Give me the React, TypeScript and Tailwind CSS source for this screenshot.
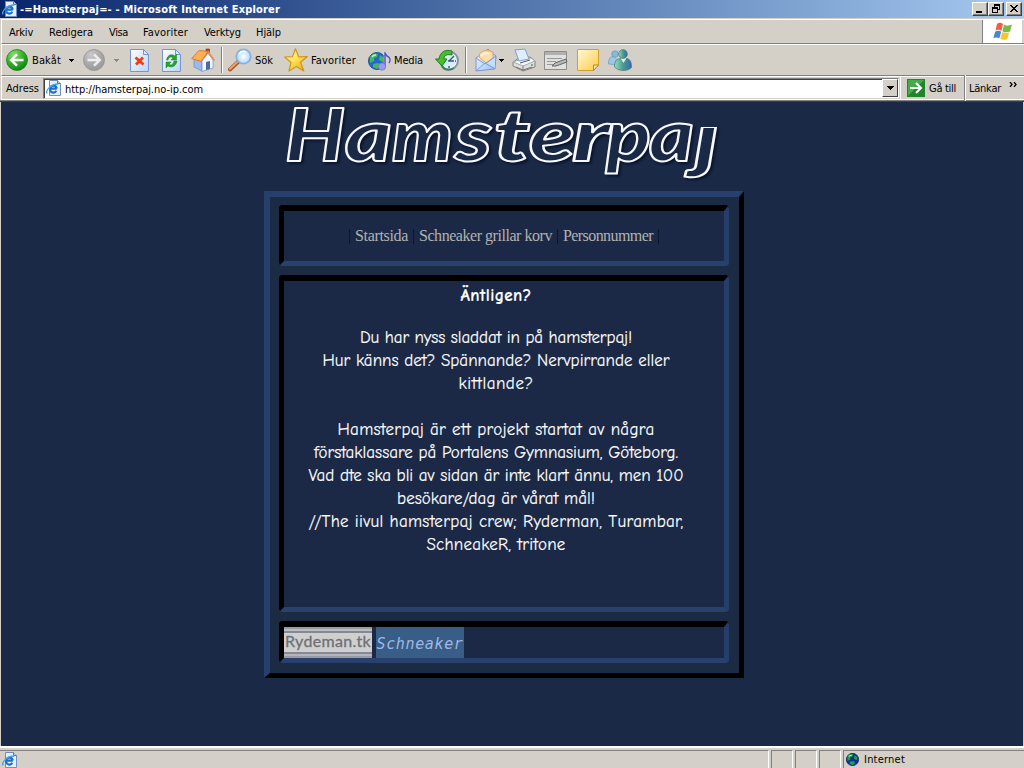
import { useLayoutEffect, useRef, useState, type ReactNode } from "react";

function Fit({ width, children, className = "" }: { width: number; children: string; className?: string }) {
  const ref = useRef<HTMLSpanElement>(null);
  const [spacing, setSpacing] = useState(0);
  useLayoutEffect(() => {
    if (ref.current) setSpacing((width - ref.current.getBoundingClientRect().width) / children.length);
  }, [width, children]);
  return (
    <span ref={ref} className={`inline-block shrink-0 whitespace-pre ${className}`} style={{ letterSpacing: `${spacing}px` }}>
      {children}
    </span>
  );
}

function IEPage({ className }: { className: string }) {
  return (
    <svg viewBox="0 0 16 16" className={className}>
      <path d="M3.5.5h8l3 3v12h-11z" fill="#e6effc" stroke="#6f8fc0" />
      <path d="M11.5.5v3h3" fill="#bcd0ee" stroke="#5578b0" />
      <path d="M10.8 8.6H4.2a3.3 3.3 0 0 1 6.4-.8v.8M4.1 9.2a3.3 3.3 0 0 0 6.2 1.6" fill="none" stroke="#1b70cb" strokeWidth="2.1" />
      <path d="M1.2 13.4C-1 10.8 5 3.8 12.4 4" fill="none" stroke="#45a4e8" strokeWidth="1.3" />
    </svg>
  );
}
function Down({ className = "" }: { className?: string }) {
  return <svg viewBox="0 0 5 3" shapeRendering="crispEdges" className={`h-[3px] w-[5px] shrink-0 ${className}`}><path d="M0 0h5L2.5 3z" fill="currentColor" /></svg>;
}
function Nav({ forward = false }: { forward?: boolean }) {
  return (
    <svg viewBox="0 0 22 22" className="size-[22px]">
      <defs>
        <radialGradient id={forward ? "nf" : "nb"} cx=".35" cy=".25" r=".85">
          <stop offset="0" stopColor={forward ? "#cacaca" : "#8be070"} />
          <stop offset=".5" stopColor={forward ? "#ababab" : "#38b02c"} />
          <stop offset="1" stopColor={forward ? "#969696" : "#087a10"} />
        </radialGradient>
      </defs>
      <circle cx="11" cy="11" r="10.5" fill={`url(#${forward ? "nf" : "nb"})`} stroke={forward ? "#929292" : "#188420"} strokeWidth=".8" />
      <path d={forward ? "M4.5 11h12M11 5.3l5.8 5.7-5.8 5.7" : "M17.5 11h-12M11 5.3L5.2 11l5.8 5.7"} fill="none" stroke={forward ? "#eee" : "#fff"} strokeWidth="2.4" />
    </svg>
  );
}
function Sheet({ children }: { children: ReactNode }) {
  return (
    <svg viewBox="0 0 19 23" className="h-[23px] w-[19px]">
      <defs><linearGradient id="sheet" x2="1" y2="1"><stop stopColor="#fff" /><stop offset="1" stopColor="#b7d4fa" /></linearGradient></defs>
      <path d="M.5.5h13l5 5v17H.5z" fill="url(#sheet)" stroke="#7595d0" />
      <path d="M13.5.5v5h5z" fill="#dcebff" stroke="#7595d0" />
      {children}
    </svg>
  );
}
function Home() {
  return (
    <svg viewBox="0 0 24 24" className="size-6">
      <path d="M15 1h3.5v8H15z" fill="#c04430" stroke="#7f332b" strokeWidth=".6" />
      <path d="M3 11l8 2v10l-8-4z" fill="#9cb9eb" stroke="#668bcf" strokeWidth=".7" />
      <path d="M11 13l6-8 5 7v8l-11 3.5z" fill="#f3f7ff" stroke="#7795cf" strokeWidth=".8" />
      <path d="M.7 10.5L8 2.5l9 1-7 10z" fill="#ffae55" stroke="#dc7d27" />
      <path d="M17 3.5l6.3 9" fill="none" stroke="#e49145" strokeWidth="1.6" />
      <path d="M15 14l4-1v8l-4 1z" fill="#4a69a6" />
    </svg>
  );
}
function Search() {
  return (
    <svg viewBox="0 0 24 24" className="size-6">
      <defs><radialGradient id="lens"><stop stopColor="#fff" /><stop offset="1" stopColor="#a5dafc" /></radialGradient></defs>
      <path d="M2 21.5l8-7.5" stroke="#aa5b2a" strokeWidth="4" strokeLinecap="round" />
      <path d="M2 20.8l7-6.6" stroke="#f1a166" strokeWidth="2" strokeLinecap="round" />
      <circle cx="15.5" cy="8.5" r="7.2" fill="url(#lens)" stroke="#8dafd8" strokeWidth="1.7" />
      <path d="M11 6c2-3 5-3 7-2" stroke="#fff" fill="none" strokeWidth="1.5" />
    </svg>
  );
}
function Star() {
  return (
    <svg viewBox="0 0 24 24" className="size-6">
      <defs><linearGradient id="star" x2=".8" y2="1"><stop stopColor="#fffbd0" /><stop offset=".5" stopColor="#ffe45c" /><stop offset="1" stopColor="#ebac13" /></linearGradient></defs>
      <path d="M11.5.8l3.2 8 8.6-.3-6.7 5.7 3.2 8.8-7.4-4.5L5 23l2-8.5L.6 9l8-.4z" fill="url(#star)" stroke="#d09518" strokeWidth="1.2" strokeLinejoin="round" />
    </svg>
  );
}
function Globe({ small = false }: { small?: boolean }) {
  return (
    <svg viewBox="0 0 18 18" className={small ? "size-[13px] shrink-0" : "size-[18px] shrink-0"}>
      <circle cx="9" cy="9" r="8.5" fill={small ? "#1428aa" : "#2368d0"} stroke={small ? "#0b1b45" : "#2455a0"} />
      <path d="M2 5c2-4 6-4 8-3l-1 3-3 1v3l-4 2zM12 3l4 3-1 4-4-2zM5 12l5-1 3 3-4 3-4-2z" fill={small ? "#18a53c" : "#43bb52"} />
      <path d="M4 5c1-2 3-2 4-2" stroke="#b9f4d0" strokeWidth="1.4" fill="none" />
    </svg>
  );
}
function Media() {
  return (
    <div className="flex w-6 pt-[3px]">
      <Globe />
      <svg viewBox="0 0 14 20" className="-ml-2 h-5 w-[14px] shrink-0">
        <path d="M7 15V1l2 3c3 1 4 4 2 7" fill="none" stroke="#dde" strokeWidth="2.6" />
        <path d="M7 15V1l2 3c3 1 4 4 2 7" fill="none" stroke="#5558b5" strokeWidth="1.5" />
        <circle cx="4" cy="14.5" r="3.7" fill="#9b9cf0" stroke="#6564bd" strokeWidth=".6" />
      </svg>
    </div>
  );
}
function History() {
  return (
    <svg viewBox="0 0 24 24" className="size-6">
      <circle cx="14" cy="12.5" r="9" fill="#e8f6ff" stroke="#8793a2" strokeWidth="2" />
      <circle cx="14" cy="12.5" r="7" fill="#d6edfb" />
      <path d="M14 13l5-5M13 13h6M14 6v1M14 18v2M20 13h1" stroke="#40576f" strokeWidth="1.4" />
      <path d="M17 3C10 1 5 4 4 11H.5L7 18l5-7H9c0-4 3-5 8-4z" fill="#49bc31" stroke="#197f1e" />
      <path d="M7 18c2 4 7 5 12 2" stroke="#41805d" fill="none" strokeWidth="2" />
    </svg>
  );
}
function Mail() {
  return (
    <svg viewBox="0 0 22 24" className="h-6 w-[22px]">
      <defs><linearGradient id="mail" x2="1" y2="1"><stop stopColor="#fff" /><stop offset="1" stopColor="#90bdf8" /></linearGradient></defs>
      <path d="M1 10L13 1l8 7-1 13L1 23z" fill="url(#mail)" stroke="#8192d1" />
      <path d="M4 9c0-6 6-8 14-5v6l-7 5z" fill="#ffdda8" stroke="#dda26c" />
      <path d="M6 8c2-3 6-3 9-2" stroke="#fff0ce" strokeWidth="2" fill="none" />
      <path d="M2 11l8 6 10-8v11l-8-5-10 7z" fill="#c6e5ff" opacity=".75" />
      <path d="M1 10l9 6 11-8M1 23l9-8 10 6" fill="none" stroke="#8298d8" />
    </svg>
  );
}
function Printer() {
  return (
    <svg viewBox="0 0 24 24" className="size-6">
      <path d="M1 14l6-4 11-1 5 4v6L11 23 1 18z" fill="#dedede" stroke="#828282" />
      <path d="M1 14l10 4 12-5-4-3-12 2z" fill="#f6f6f6" stroke="#aaa" />
      <path d="M3 2l10-1 4 10-10 2z" fill="#dfefff" stroke="#7e9ed5" />
      <path d="M11 18v5M4 19l7 3 9-3" stroke="#777" fill="none" />
      <path d="M8 15l10-3" stroke="#565656" /><path d="M19 17h2" stroke="#46aa58" strokeWidth="1.5" />
    </svg>
  );
}
function Edit() {
  return (
    <svg viewBox="0 0 24 20" className="h-5 w-6">
      <path d="M.5 1.5h22v18H.5z" fill="#e0e0df" stroke="#8c8c8c" /><path d="M1 2h21v3H1z" fill="#b0b0b0" />
      <path d="M3 8.5h15M3 11.5h9M3 14.5h6" stroke="#999" />
      <path d="M8 16l3-3 11-4 1 3-11 4z" fill="#b8b8b8" stroke="#666" />
    </svg>
  );
}
function Note() {
  return (
    <svg viewBox="0 0 22 22" className="size-[22px]">
      <defs><linearGradient id="note" x2="1" y2="1"><stop stopColor="#fffbd5" /><stop offset="1" stopColor="#ffc94a" /></linearGradient></defs>
      <path d="M.5.5h21v16l-5 5H.5z" fill="url(#note)" stroke="#d2a026" /><path d="M21.5 16h-5v5.5z" fill="#fff0a2" stroke="#bb861c" />
    </svg>
  );
}
function People() {
  return (
    <svg viewBox="0 0 24 22" className="h-[22px] w-6">
      <defs><linearGradient id="person" x2="1"><stop stopColor="#98dfb8" /><stop offset=".5" stopColor="#4b9b91" /><stop offset="1" stopColor="#386ab0" /></linearGradient></defs>
      <circle cx="7" cy="5" r="3.3" fill="#87b7dc" stroke="#638eb5" strokeWidth=".6" /><path d="M.5 15c0-6 2-8 6-7l3 3v5z" fill="#99c8e8" stroke="#638eb5" strokeWidth=".6" />
      <path d="M6.5 18c0-6 2-8 6-8.5l3 3 3-3c4 .5 5 4 5 9-4 4-13 4-17-.5z" fill="url(#person)" stroke="#417477" strokeWidth=".7" />
      <path d="M13 10h5l-2.500 4z" fill="#d8f3ee" />
      <circle cx="15" cy="5" r="4.3" fill="url(#person)" stroke="#397466" strokeWidth=".7" />
    </svg>
  );
}
function Sep({ className }: { className: string }) {
  return <div className={`h-[26px] w-[2px] shrink-0 border-l border-[#808080] border-r border-r-white ${className}`} />;
}
function WinButton({ kind, className = "" }: { kind: string; className?: string }) {
  return (
    <div className={`flex h-[14px] w-4 items-center justify-center border border-t-white border-l-white border-r-[#404040] border-b-[#404040] bg-[#d4d0c8] shadow-[inset_-1px_-1px_#808080] ${className}`}>
      <svg viewBox="0 0 12 10" shapeRendering="crispEdges" className="h-[10px] w-3">
        {kind === "min" && <path d="M2 7h6v2H2z" />}
        {kind === "max" && <path d="M4 0h6v6H8V5h1V2H5v1H4zM2 3h6v6H2zM3 5v3h4V5z" fillRule="evenodd" />}
        {kind === "close" && <path d="M2 1h2v1h1v1h2V2h1V1h2v1H9v1H8v1H7v1h1v1h1v1h1v1H8V7H7V6H5v1H4v1H2V7h1V6h1V5h1V4H4V3H3V2H2z" />}
      </svg>
    </div>
  );
}

function Browser() {
  return (
    <header className="text-[11px] leading-none text-black">
      <div className="flex h-[18px] items-center bg-linear-to-r from-[#0a246a] to-[#a6caf0] pl-[2px] pr-[2px] text-white">
        <IEPage className="size-4" />
        <Fit width={260} className="ml-[2px] font-bold">-=Hamsterpaj=- - Microsoft Internet Explorer</Fit>
        <div className="ml-auto flex"><WinButton kind="min" /><WinButton kind="max" /><WinButton kind="close" className="ml-[2px]" /></div>
      </div>
      <div className="mt-[1px] ml-px flex h-[25px] border-t border-b border-l border-white border-b-[#808080]">
        <div className="flex flex-1 items-center border-r border-[#808080] pt-[2px]">
          <Fit width={24} className="ml-[7px]">Arkiv</Fit><Fit width={44} className="ml-4">Redigera</Fit><Fit width={19} className="ml-4">Visa</Fit><Fit width={45} className="ml-[15px]">Favoriter</Fit><Fit width={37} className="ml-4">Verktyg</Fit><Fit width={25} className="ml-[15px]">Hjälp</Fit>
        </div>
        <div className="flex w-[41px] items-center justify-center border-r-2 border-l border-white border-r-[#d4d0c8] bg-white">
          <svg viewBox="0 0 20 19" className="h-[19px] w-5">
            <path d="M4 2c3-2 4-1 6 0L8.5 9C6 7 4 8 2.5 8.5z" fill="#ef6042" /><path d="M11 2.6c3 2 5 1 8 0l-2 7c-3 1-5 1-7.5-.2z" fill="#76b943" />
            <path d="M2.2 9.500c3-1 4-1 6 .2l-1.800 6.500c-2-1-4-1-6 0z" fill="#4586d8" /><path d="M9.2 10.3c3 1 4 1 7 .2l-2 6.8c-3 1-5 .6-6.8-.5z" fill="#f8c52b" />
          </svg>
        </div>
      </div>
      <div className="ml-px flex h-8 items-center border-t border-b border-l border-white border-b-[#808080]">
        <div className="ml-1 size-[22px] shrink-0"><Nav /></div><Fit width={29} className="ml-1">Bakåt</Fit><Down className="ml-2" />
        <div className="ml-[9px] size-[22px] shrink-0"><Nav forward /></div><Down className="ml-[9px] text-[#888]" />
        <div className="ml-[11px] shrink-0"><Sheet><path d="M5.5 8.5l8 7M13 8.5l-7 7" stroke="#f13c12" strokeWidth="2.8" /></Sheet></div>
        <div className="ml-[13px] shrink-0"><Sheet><path d="M4.5 11c1-6 6-6 8-4l2-2v6H9l2-2c-2-2-4-1-5 2zM15 12c-1 6-6 7-9 5l-2 2v-6h5l-2 2c2 2 4 1 5-3z" fill="#25a52b" stroke="#14811d" strokeWidth=".5" /></Sheet></div>
        <div className="ml-[10px] shrink-0"><Home /></div><Sep className="ml-[6px]" />
        <div className="ml-[5px] shrink-0"><Search /></div><Fit width={18} className="ml-[3px]">Sök</Fit>
        <div className="ml-[11px] shrink-0"><Star /></div><Fit width={45} className="ml-[3px]">Favoriter</Fit>
        <div className="ml-[12px] shrink-0"><Media /></div><Fit width={29} className="ml-[2px]">Media</Fit>
        <div className="ml-[12px] shrink-0"><History /></div><Sep className="ml-[6px]" />
        <div className="ml-[8px] shrink-0"><Mail /></div><Down className="ml-[2px]" />
        <div className="ml-[8px] shrink-0"><Printer /></div><div className="ml-[8px] shrink-0"><Edit /></div><div className="ml-[9px] shrink-0"><Note /></div><div className="ml-[9px] shrink-0"><People /></div>
      </div>
      <div className="ml-px flex h-[24px] items-center border-t border-b border-l border-white border-b-white">
        <Fit width={33} className="ml-1">Adress</Fit>
        <div className="ml-[4px] flex h-[21px] w-[856px] items-center border border-[#808080] border-r-white border-b-[#d4d0c8] bg-white pl-[2px] shadow-[inset_1px_1px_#404040]">
          <IEPage className="size-4" /><Fit width={138} className="ml-[3px] mt-[2px]">http://hamsterpaj.no-ip.com</Fit>
          <div className="ml-auto flex h-[18px] w-4 items-center justify-center border border-white border-r-[#404040] border-b-[#404040] bg-[#d4d0c8]"><svg viewBox="0 0 7 4" className="h-1 w-[7px]" shapeRendering="crispEdges"><path d="M0 0h7L3.5 4z" /></svg></div>
        </div>
        <div className="ml-px h-[22px] w-px bg-white" />
        <svg viewBox="0 0 18 18" className="ml-[6px] size-[18px]"><path d="M0 0h18v18H0z" fill="#20842a" /><path d="M1 1h16L1 17z" fill="#43ac48" /><path d="M3 9h11M9 4l5 5-5 5" fill="none" stroke="#fff" strokeWidth="2" /></svg>
        <Fit width={27} className="ml-[4px]">Gå till</Fit><Sep className="ml-[8px]" /><Fit width={32} className="ml-[3px]">Länkar</Fit>
        <svg viewBox="0 0 8 5" className="mb-[7px] ml-[8px] h-[5px] w-2" ><path d="M1 0l2 2.5L1 5M5 0l2 2.5L5 5" fill="none" stroke="#000" strokeWidth="1.3" /></svg>
      </div>
      <div className="h-[2px] border-t border-[#808080] bg-[#404040]" />
    </header>
  );
}

const letters: [string, number, number][] = [["H", 21, 60], ["a", 81, 47], ["m", 128, 61], ["s", 191, 37], ["t", 230, 36], ["e", 265, 46], ["r", 308, 38], ["p", 342, 45], ["a", 385, 45]];
function Logo() {
  return (
    <svg viewBox="0 0 480 89" className="h-[89px] w-[480px] overflow-visible drop-shadow-[2px_2px_1px_#0b152b]">
      <defs><clipPath id="tail"><path d="M390 25h90v64h-90z" /></clipPath></defs>
      <g fill="#1a2945" stroke="#f8faff" strokeWidth="2" strokeLinejoin="round" className="font-['Lato',sans-serif] text-[73px] font-black italic">
        <text y="59">{letters.map(([c, x, w], i) => <tspan key={i} x={x} textLength={w} lengthAdjust="spacingAndGlyphs">{c}</tspan>)}</text>
        <g clipPath="url(#tail)"><text x="430" y="62" textLength="25" lengthAdjust="spacingAndGlyphs">j</text></g>
      </g>
    </svg>
  );
}
function Inset({ children, className }: { children: ReactNode; className: string }) {
  return <section className={`w-[450px] rounded-[4px] border-t-[6px] border-r-[5px] border-b-[5px] border-l-[5px] border-t-black border-l-black border-r-[#263e6b] border-b-[#29416d] ${className}`}><div className="h-full bg-[#1b2946]">{children}</div></section>;
}
function Copy({ width, children, bold = false }: { width: number; children: string; bold?: boolean }) {
  return <div className="flex h-[23px] items-center justify-center"><Fit width={width} className={bold ? "font-bold" : ""}>{children}</Fit></div>;
}

export default function App() {
  return (
    <div className="flex h-[768px] w-[1024px] flex-col overflow-hidden bg-[#d4d0c8] font-['DejaVu_Sans_Condensed','DejaVu_Sans',sans-serif]">
      <Browser />
      <main className="ml-px mr-px flex min-h-0 flex-1 flex-col bg-[#1a2945] pl-[263px]">
        <Logo />
        <div className="h-[487px] w-[480px] border-t-[6px] border-r-[5px] border-b-[5px] border-l-[6px] border-t-[#273f6c] border-r-black border-b-black border-l-[#273f6c] bg-[#1a2b43] pt-2 pl-[9px]">
          <Inset className="h-[61px]">
            <nav className="flex h-full items-center pl-[65px] font-['Liberation_Serif',serif] text-[16px] text-[#b2b2b2]">
              <span className="h-[15px] w-px bg-[#0c172c]" /><Fit width={53} className="ml-[5px]">Startsida</Fit>
              <span className="ml-[5px] h-[15px] w-px bg-[#0c172c]" /><Fit width={133} className="ml-[5px]">Schneaker grillar korv</Fit>
              <span className="ml-[5px] h-[15px] w-px bg-[#0c172c]" /><Fit width={90} className="ml-[5px]">Personnummer</Fit>
              <span className="ml-[5px] h-[15px] w-px bg-[#0c172c]" />
            </nav>
          </Inset>
          <Inset className="mt-[9px] h-[337px]">
            <article className="w-[424px] pt-[3px] font-['Comic_Sans_MS','Comic_Neue','Lato',sans-serif] text-[17px] leading-[23px] text-white [-webkit-text-stroke:0.15px_white]">
              <Copy width={71} bold>Äntligen?</Copy><div className="h-[19px]" />
              <Copy width={272}>Du har nyss sladdat in på hamsterpaj!</Copy>
              <Copy width={347}>Hur känns det? Spännande? Nervpirrande eller</Copy>
              <Copy width={75}>kittlande?</Copy><div className="h-[23px]" />
              <Copy width={317}>Hamsterpaj är ett projekt startat av några</Copy>
              <Copy width={364}>förstaklassare på Portalens Gymnasium, Göteborg.</Copy>
              <Copy width={375}>Vad dte ska bli av sidan är inte klart ännu, men 100</Copy>
              <Copy width={198}>besökare/dag är vårat mål!</Copy>
              <Copy width={375}>//The iivul hamsterpaj crew; Ryderman, Turambar,</Copy>
              <Copy width={139}>SchneakeR, tritone</Copy>
            </article>
          </Inset>
          <Inset className="mt-[9px] h-[42px]">
            <div className="flex h-[31px] gap-1">
              <div className="flex w-[88px] flex-col bg-[#cfcfcd] font-['Lato',sans-serif] text-[16px] leading-[16px] text-[#6d7079]">
                <div className="h-[7px] border-y-2 border-t-[#9a9aa2] border-b-[#858899] bg-[#bdbdbe]" />
                <div className="flex flex-1 items-center justify-center pb-[3px] [-webkit-text-stroke:0.3px_#6d7079]"><Fit width={86}>Rydeman.tk</Fit></div>
                <div className="h-[6px] border-y-2 border-t-[#858899] border-b-[#9a9aa2] bg-[#b4b5b9]" />
              </div>
              <div className="flex w-[88px] items-center justify-center bg-[#385d87] pt-1 font-['DejaVu_Sans_Mono',monospace] text-[15px] italic leading-none text-[#9fb8e4]"><Fit width={87}>Schneaker</Fit></div>
            </div>
          </Inset>
        </div>
      </main>
      <footer className="flex h-[22px] items-end border-t-2 border-white text-[11px]">
        <div className="flex h-[18px] w-[769px] items-center border-t border-r border-t-[#808080] border-r-white pl-[2px]"><IEPage className="size-4" /></div>
        <div className="ml-[2px] h-[18px] w-[22px] border-t border-r border-l border-[#808080] border-r-white" />
        <div className="ml-[2px] h-[18px] w-[22px] border-t border-r border-l border-[#808080] border-r-white" />
        <div className="ml-[2px] h-[18px] w-[22px] border-t border-r border-l border-[#808080] border-r-white" />
        <div className="ml-[2px] flex h-[18px] flex-1 items-center border-t border-l border-[#808080] pl-[2px]"><Globe small /><Fit width={41} className="ml-[5px] mt-px">Internet</Fit></div>
      </footer>
    </div>
  );
}
